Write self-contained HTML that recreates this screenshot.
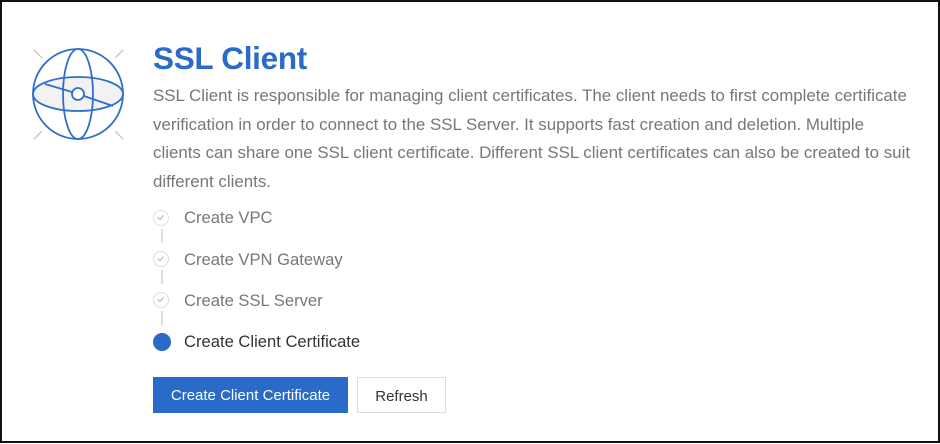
<!DOCTYPE html>
<html><head><style>
body{margin:0;width:940px;height:444px;background:#fff;font-family:"Liberation Sans",Arial,sans-serif;position:relative;overflow:hidden}
.frame{position:absolute;left:0;top:0;width:936px;height:439px;border:2px solid #111;}
h1{position:absolute;left:153px;top:40px;margin:0;font-size:31.5px;font-weight:bold;color:#2a6ac8;letter-spacing:-0.3px}
p{position:absolute;left:153px;top:82px;margin:0;font-size:16.9px;line-height:28.5px;color:#777;white-space:nowrap}
.step{position:absolute;left:184px;font-size:16.6px;color:#777}
.ck{position:absolute;left:153px;width:16px;height:16px;border:1.5px solid #ddd;border-radius:50%;box-sizing:border-box}
.ln{position:absolute;left:161px;width:1.5px;height:14px;background:#ddd}
.btn{position:absolute;top:377px;height:36px;box-sizing:border-box;font-size:15px;text-align:center;line-height:38px}
</style></head><body>
<div class="frame"></div>
<svg style="position:absolute;left:0;top:0" width="160" height="160" viewBox="0 0 160 160">
<g stroke="#c8c8c8" stroke-width="1.3"><line x1="34" y1="50" x2="42" y2="58"/><line x1="123" y1="50" x2="115" y2="58"/><line x1="34" y1="139" x2="42" y2="131"/><line x1="123" y1="139" x2="115" y2="131"/></g>
<g stroke="#2f6fcb" stroke-width="1.8" fill="none">
<ellipse cx="78" cy="94" rx="45" ry="17" fill="#f2f2f2"/>
<circle cx="78" cy="94" r="45"/>
<ellipse cx="78" cy="94" rx="15" ry="45"/>
<line x1="45" y1="84" x2="72" y2="92"/><line x1="84" y1="96" x2="113" y2="106"/>
<circle cx="78" cy="94" r="6" fill="#fff"/>
</g></svg>
<h1>SSL Client</h1>
<p>SSL Client is responsible for managing client certificates. The client needs to first complete certificate<br>verification in order to connect to the SSL Server. It supports fast creation and deletion. Multiple<br>clients can share one SSL client certificate. Different SSL client certificates can also be created to suit<br>different clients.</p>
<div class="ck" style="top:210px"><svg width="13" height="13" viewBox="0 0 13 13" style="position:absolute;left:0;top:0"><path d="M3.5 6.5l2.5 2 3.5-4" stroke="#bbb" stroke-width="1.2" fill="none"/></svg></div>
<div class="ln" style="top:229px"></div>
<div class="ck" style="top:251px"><svg width="13" height="13" viewBox="0 0 13 13" style="position:absolute;left:0;top:0"><path d="M3.5 6.5l2.5 2 3.5-4" stroke="#bbb" stroke-width="1.2" fill="none"/></svg></div>
<div class="ln" style="top:270px"></div>
<div class="ck" style="top:292px"><svg width="13" height="13" viewBox="0 0 13 13" style="position:absolute;left:0;top:0"><path d="M3.5 6.5l2.5 2 3.5-4" stroke="#bbb" stroke-width="1.2" fill="none"/></svg></div>
<div class="ln" style="top:311px"></div>
<div style="position:absolute;left:153px;top:333px;width:18px;height:18px;border-radius:50%;background:#2a6ac8"></div>
<div class="step" style="top:208px">Create VPC</div>
<div class="step" style="top:250px">Create VPN Gateway</div>
<div class="step" style="top:291px">Create SSL Server</div>
<div class="step" style="top:332px;color:#333">Create Client Certificate</div>
<div class="btn" style="left:153px;width:195px;background:#2a6ac8;color:#fff">Create Client Certificate</div>
<div class="btn" style="left:357px;width:89px;border:1px solid #ddd;color:#333">Refresh</div>
</body></html>
